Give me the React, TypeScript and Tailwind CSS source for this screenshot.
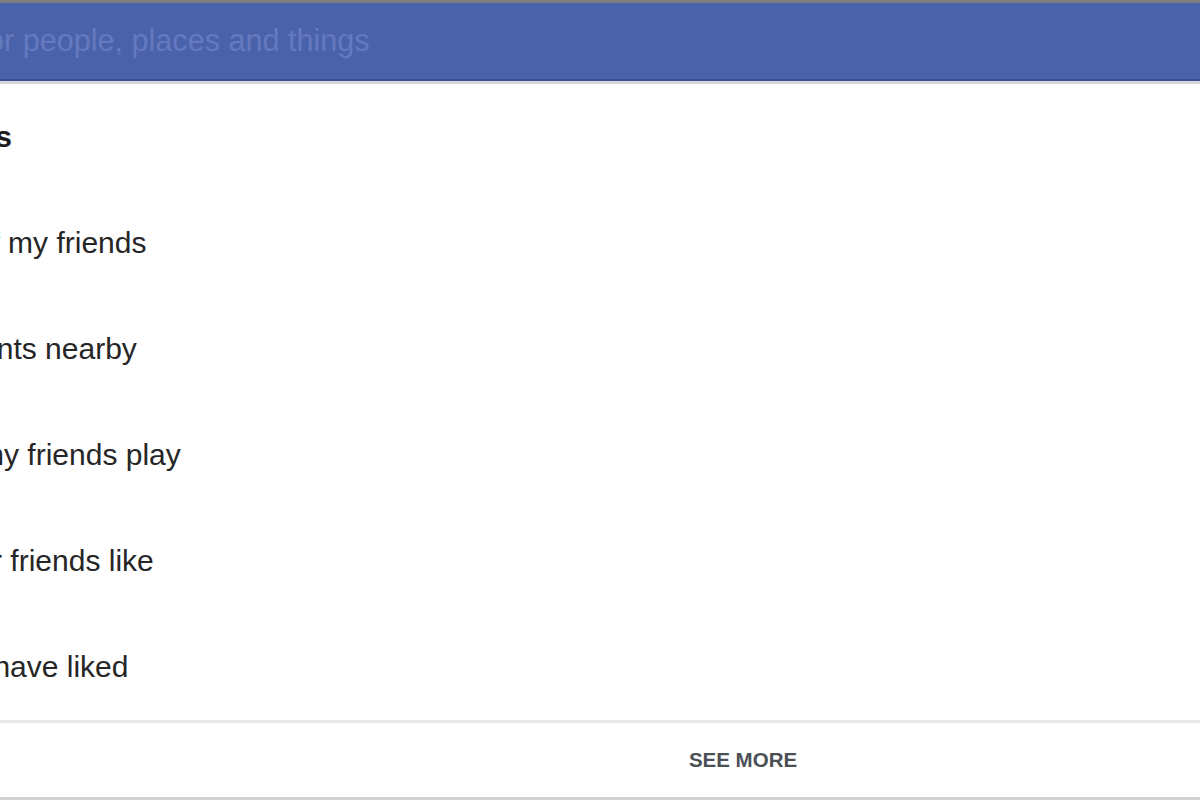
const suggestions = [
  { label: "My friends", offset: "ml-[-138px]", bold: true },
  { label: "Photos of my friends", offset: "ml-[-127px]" },
  { label: "Restaurants nearby", offset: "ml-[-125px]" },
  { label: "Games my friends play", offset: "ml-[-126px]" },
  { label: "Music your friends like", offset: "ml-[-143px]" },
  { label: "Photos I have liked", offset: "ml-[-125px]" },
];

export default function App() {
  return (
    <div className="w-[1200px] h-[800px] overflow-hidden bg-white font-['Liberation_Sans',Arial,sans-serif]">
      <div className="h-[3px] bg-[#7c7c7c]" />
      <div className="h-[78px] bg-[#4a62a9] border-b-2 border-[#3b5094] flex items-center overflow-hidden">
        <input
          type="text"
          placeholder="Search for people, places and things"
          className="ml-[-127px] w-[1327px] bg-transparent outline-none text-[30.6px] text-white placeholder-[#6579bf]"
        />
      </div>
      <div className="h-[3px] bg-[#d4d6da]" />

      <ul>
        {suggestions.map((s) => (
          <li key={s.label} className="h-[106px] flex items-center overflow-hidden">
            <span
              className={`${s.offset} whitespace-nowrap text-[30px] leading-none ${
                s.bold ? "font-bold text-[#1d1d1d]" : "text-[#262626]"
              }`}
            >
              {s.label}
            </span>
          </li>
        ))}
      </ul>

      <div className="h-[3px] bg-[#e8e8e8]" />
      <div className="h-[74px] flex items-center justify-center pl-[286px]">
        <span className="text-[20.5px] font-bold text-[#4b4f56]">SEE MORE</span>
      </div>
      <div className="h-[4px] bg-[#d2d2d2]" />
    </div>
  );
}
